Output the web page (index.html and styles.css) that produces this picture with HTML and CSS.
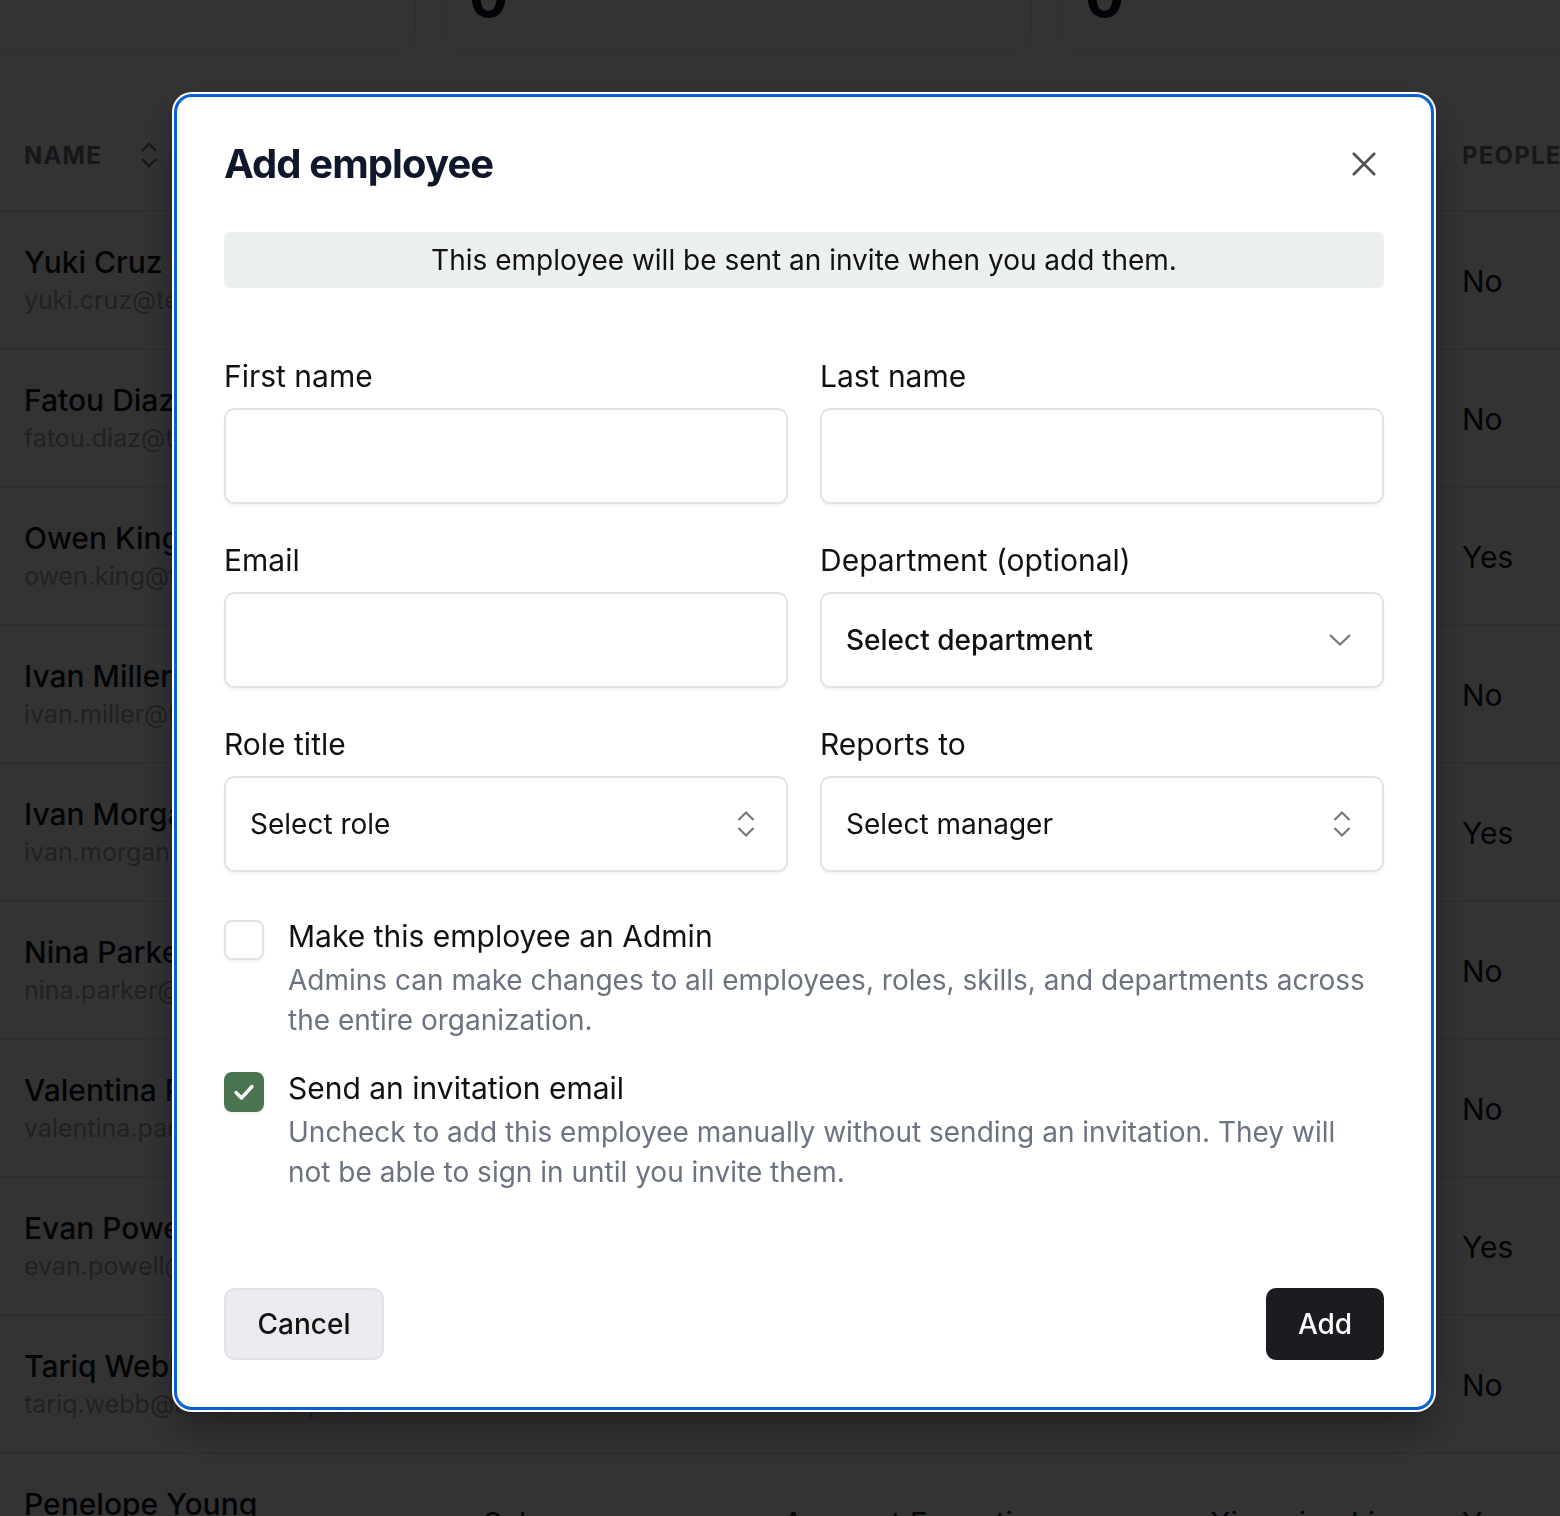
FILE: index.html
```html
<!DOCTYPE html>
<html lang="en">
  <head>
    <meta charset="UTF-8" />
    <meta name="viewport" content="width=device-width, initial-scale=1.0" />
    <title>Employees</title>

    <link rel="stylesheet" href="styles.css">
  </head>

  <body>
    <!-- summary cards -->
    <section class="stats">
      <div class="stat-card"><span class="stat-value">0</span></div>
      <div class="stat-card"><span class="stat-value">0</span></div>
      <div class="stat-card"><span class="stat-value">0</span></div>
    </section>

    <!-- employee table -->
    <section class="people-table">
      <div class="row head">
        <div class="cell">
          NAME
          <svg class="sort-icon" width="18" height="28" viewBox="0 0 18 28">
            <path d="M2 10 L9 3 L16 10 M2 18 L9 25 L16 18" />
          </svg>
        </div>
        <div class="cell">DEPARTMENT</div>
        <div class="cell">ROLE</div>
        <div class="cell">REPORTS TO</div>
        <div class="cell">PEOPLE MANAGER</div>
      </div>

      <div class="row">
        <div class="cell person"><span class="name">Yuki Cruz</span><span class="email">yuki.cruz@testcorp.dev</span></div>
        <div class="cell">Engineering</div>
        <div class="cell">Software Engineer</div>
        <div class="cell">Owen King</div>
        <div class="cell">No</div>
      </div>
      <div class="row">
        <div class="cell person"><span class="name">Fatou Diaz</span><span class="email">fatou.diaz@testcorp.dev</span></div>
        <div class="cell">Design</div>
        <div class="cell">Product Designer</div>
        <div class="cell">Ivan Morgan</div>
        <div class="cell">No</div>
      </div>
      <div class="row">
        <div class="cell person"><span class="name">Owen King</span><span class="email">owen.king@testcorp.dev</span></div>
        <div class="cell">Engineering</div>
        <div class="cell">Engineering Manager</div>
        <div class="cell">Nina Parker</div>
        <div class="cell">Yes</div>
      </div>
      <div class="row">
        <div class="cell person"><span class="name">Ivan Miller</span><span class="email">ivan.miller@testcorp.dev</span></div>
        <div class="cell">Support</div>
        <div class="cell">Support Specialist</div>
        <div class="cell">Evan Powell</div>
        <div class="cell">No</div>
      </div>
      <div class="row">
        <div class="cell person"><span class="name">Ivan Morgan</span><span class="email">ivan.morgan@testcorp.dev</span></div>
        <div class="cell">Design</div>
        <div class="cell">Design Lead</div>
        <div class="cell">Nina Parker</div>
        <div class="cell">Yes</div>
      </div>
      <div class="row">
        <div class="cell person"><span class="name">Nina Parker</span><span class="email">nina.parker@testcorp.dev</span></div>
        <div class="cell">Operations</div>
        <div class="cell">Operations Analyst</div>
        <div class="cell">Evan Powell</div>
        <div class="cell">No</div>
      </div>
      <div class="row">
        <div class="cell person"><span class="name">Valentina Park</span><span class="email">valentina.park@testcorp.dev</span></div>
        <div class="cell">Marketing</div>
        <div class="cell">Content Strategist</div>
        <div class="cell">Tariq Webb</div>
        <div class="cell">No</div>
      </div>
      <div class="row">
        <div class="cell person"><span class="name">Evan Powell</span><span class="email">evan.powell@testcorp.dev</span></div>
        <div class="cell">Operations</div>
        <div class="cell">Head of Operations</div>
        <div class="cell">Xiaoming Li</div>
        <div class="cell">Yes</div>
      </div>
      <div class="row">
        <div class="cell person"><span class="name">Tariq Webb</span><span class="email">tariq.webb@testdatacorp.dev</span></div>
        <div class="cell">Marketing</div>
        <div class="cell">Marketing Manager</div>
        <div class="cell">Evan Powell</div>
        <div class="cell">No</div>
      </div>
      <div class="row">
        <div class="cell person"><span class="name">Penelope Young</span><span class="email">penelope.young@testcorp.dev</span></div>
        <div class="cell">Sales</div>
        <div class="cell">Account Executive</div>
        <div class="cell">Xiaoming Li</div>
        <div class="cell">Yes</div>
      </div>
    </section>

    <!-- add employee dialog -->
    <div class="overlay">
      <form class="modal">
        <div class="modal-head">
          <h2 class="modal-title">Add employee</h2>
          <button type="button" class="close-btn" aria-label="Close">
            <svg width="26" height="26" viewBox="0 0 26 26">
              <path d="M2 2 L24 24 M24 2 L2 24" />
            </svg>
          </button>
        </div>

        <p class="notice">This employee will be sent an invite when you add them.</p>

        <div class="fields">
          <label class="field">
            <span class="field-label">First name</span>
            <input class="text-input" type="text" name="first-name" />
          </label>
          <label class="field">
            <span class="field-label">Last name</span>
            <input class="text-input" type="text" name="last-name" />
          </label>
          <label class="field">
            <span class="field-label">Email</span>
            <input class="text-input" type="email" name="email" />
          </label>
          <div class="field">
            <span class="field-label">Department (optional)</span>
            <div class="select-box">
              <span class="select-text strong">Select department</span>
              <svg class="chevron" width="22" height="12" viewBox="0 0 22 12">
                <path d="M1 1 L11 10.5 L21 1" />
              </svg>
            </div>
          </div>
          <div class="field">
            <span class="field-label">Role title</span>
            <div class="select-box">
              <span class="select-text">Select role</span>
              <svg class="chevron" width="18" height="28" viewBox="0 0 18 28">
                <path d="M1.5 10 L9 2.5 L16.5 10 M1.5 18 L9 25.5 L16.5 18" />
              </svg>
            </div>
          </div>
          <div class="field">
            <span class="field-label">Reports to</span>
            <div class="select-box">
              <span class="select-text">Select manager</span>
              <svg class="chevron" width="18" height="28" viewBox="0 0 18 28">
                <path d="M1.5 10 L9 2.5 L16.5 10 M1.5 18 L9 25.5 L16.5 18" />
              </svg>
            </div>
          </div>
        </div>

        <div class="options">
          <div class="option">
            <span class="checkbox"></span>
            <div class="option-body">
              <div class="option-title">Make this employee an Admin</div>
              <div class="option-desc">Admins can make changes to all employees, roles, skills, and departments across the entire organization.</div>
            </div>
          </div>
          <div class="option">
            <span class="checkbox checked">
              <svg width="28" height="28" viewBox="0 0 28 28">
                <path d="M6 14.5 L11.5 20 L22 8.5" />
              </svg>
            </span>
            <div class="option-body">
              <div class="option-title">Send an invitation email</div>
              <div class="option-desc">Uncheck to add this employee manually without sending an invitation. They will not be able to sign in until you invite them.</div>
            </div>
          </div>
        </div>

        <div class="actions">
          <button type="button" class="btn btn-cancel">Cancel</button>
          <button type="button" class="btn btn-add">Add</button>
        </div>
      </form>
    </div>
  </body>
</html>
```

FILE: styles.css
```css
* {
  box-sizing: border-box;
}

body {
  margin: 0;
  background: #fff;
  color: #111827;
  font-family: Inter, "Noto Sans", sans-serif;
  overflow: hidden;
  height: 1516px;
}

/* summary cards */
.stats {
  display: flex;
  gap: 26px;
  margin: -100px 0 0 -174px;
}

.stat-card {
  flex: 0 0 590px;
  height: 150px;
  border: 1px solid #e5e7eb;
  border-radius: 16px;
  padding: 66px 0 0 26px;
}

.stat-value {
  font-size: 58px;
  font-weight: 700;
  line-height: 1;
  color: #111827;
}

/* employee table */
.people-table {
  margin-top: 50px;
  width: 1760px;
}

.row {
  display: grid;
  grid-template-columns: 459px 300px 427px 252px 322px;
  height: 138px;
  border-bottom: 2px solid #e5e7eb;
  align-items: center;
}

.row.head {
  height: 112px;
}

.cell {
  padding-left: 24px;
  font-size: 30px;
  color: #111827;
  white-space: nowrap;
}

.row:not(.head) .cell:not(.person) {
  padding-top: 2px;
}

.row.head .cell {
  font-size: 24px;
  font-weight: 700;
  letter-spacing: 1.2px;
  color: #6b7280;
  display: flex;
  align-items: center;
}

.sort-icon {
  margin-left: 38px;
  fill: none;
  stroke: #6b7280;
  stroke-width: 2.4;
}

.person {
  display: flex;
  flex-direction: column;
}

.name {
  font-weight: 500;
  line-height: 40px;
}

.email {
  font-size: 25px;
  color: #a3a3a8;
  line-height: 36px;
}

/* dialog */
.overlay {
  position: fixed;
  inset: 0;
  background: rgba(0, 0, 0, 0.8);
  display: flex;
  align-items: flex-start;
  padding: 94px 0 0 174px;
}

.modal {
  width: 1260px;
  background: #fff;
  border: 3px solid #0a60d1;
  border-radius: 18px;
  box-shadow: 0 0 0 2px #fff, 0 20px 40px rgba(0, 0, 0, 0.35);
  padding: 43px 47px 47px;
}

.modal-head {
  display: flex;
  justify-content: space-between;
  align-items: center;
  height: 48px;
}

.modal-title {
  margin: 0;
  font-size: 40px;
  font-weight: 700;
  letter-spacing: -0.9px;
  line-height: 46px;
  color: #0f172a;
}

.close-btn {
  width: 40px;
  height: 40px;
  padding: 0;
  border: 0;
  background: none;
  display: flex;
  justify-content: center;
  align-items: center;
}

.close-btn svg {
  fill: none;
  stroke: #525252;
  stroke-width: 2.6;
}

.notice {
  margin: 44px 0 0;
  height: 56px;
  background: #edf1ee;
  border-radius: 6px;
  font-size: 28px;
  line-height: 56px;
  text-align: center;
  color: #111;
}

.fields {
  margin-top: 68px;
  display: grid;
  grid-template-columns: 1fr 1fr;
  column-gap: 32px;
  row-gap: 36px;
}

.field {
  display: flex;
  flex-direction: column;
  gap: 12px;
}

.field-label {
  font-size: 30px;
  line-height: 40px;
  color: #111;
}

.text-input,
.select-box {
  height: 96px;
  border: 2px solid #e3e3e3;
  border-radius: 10px;
  box-shadow: 0 2px 3px rgba(0, 0, 0, 0.05);
  background: #fff;
}

.text-input {
  width: 100%;
  font: inherit;
  font-size: 28px;
  padding: 0 24px;
}

.select-box {
  display: flex;
  align-items: center;
  justify-content: space-between;
  padding: 0 31px 0 24px;
}

.select-text {
  font-size: 28px;
  color: #111;
}

.select-text.strong {
  font-weight: 500;
}

.chevron {
  fill: none;
  stroke: #777;
  stroke-width: 2.2;
}

.options {
  margin-top: 44px;
  display: flex;
  flex-direction: column;
  gap: 28px;
}

.option {
  display: flex;
  gap: 24px;
}

.checkbox {
  flex: 0 0 40px;
  height: 40px;
  margin-top: 4px;
  border: 2px solid #e3e3e3;
  border-radius: 8px;
  box-shadow: 0 2px 3px rgba(0, 0, 0, 0.06);
  display: flex;
  justify-content: center;
  align-items: center;
}

.checkbox.checked {
  background: #4a7350;
  border-color: #4a7350;
}

.checkbox svg {
  fill: none;
  stroke: #fff;
  stroke-width: 3.4;
  stroke-linecap: round;
  stroke-linejoin: round;
}

.option-title {
  font-size: 30px;
  line-height: 40px;
  margin-bottom: 4px;
  color: #111;
}

.option-desc {
  font-size: 28px;
  line-height: 40px;
  color: #6b7280;
}

.actions {
  margin-top: 96px;
  display: flex;
  justify-content: space-between;
}

.btn {
  height: 72px;
  border-radius: 10px;
  font: inherit;
  font-size: 28px;
  font-weight: 500;
}

.btn-cancel {
  width: 160px;
  background: #ebebef;
  border: 2px solid #e2e2e6;
  color: #111;
}

.btn-add {
  width: 118px;
  background: #1b1c20;
  border: 0;
  color: #fff;
}
```
